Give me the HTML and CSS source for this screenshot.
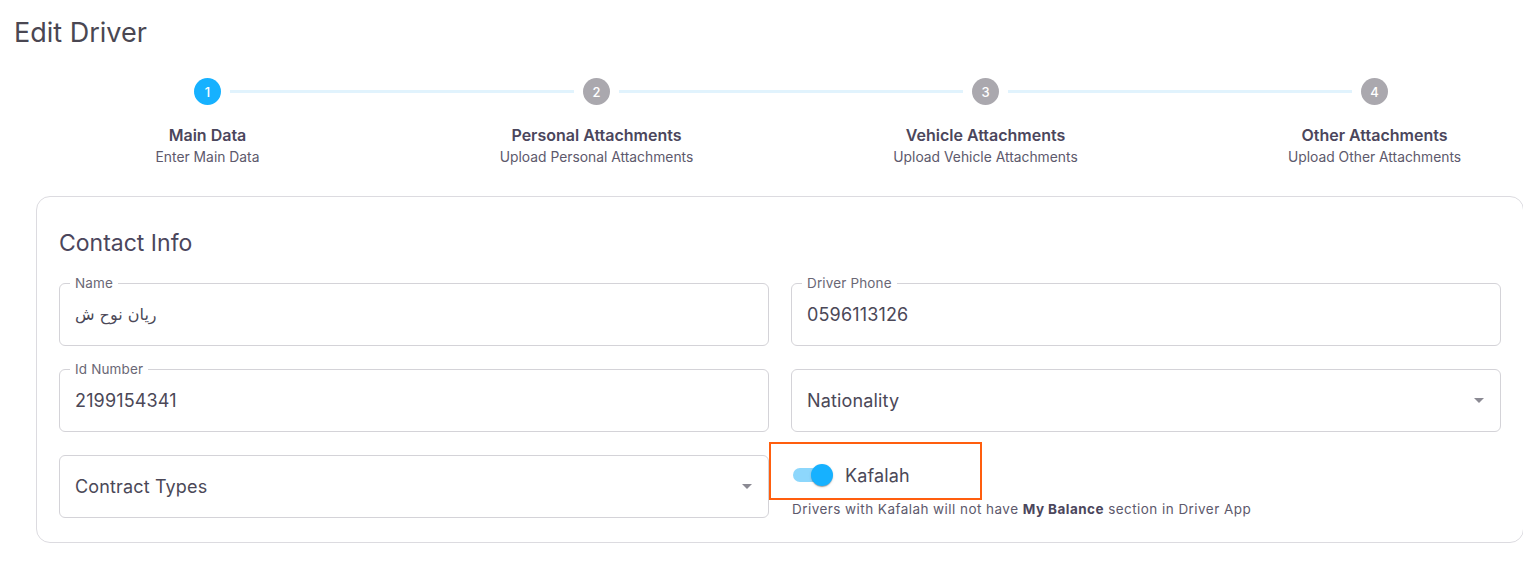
FILE: index.html
```html
<!DOCTYPE html>
<html lang="en">
<head>
<meta charset="utf-8">
<title>Edit Driver</title>
<link rel="stylesheet" href="styles.css">
</head>
<body>
<div class="page">
  <h1 class="page-title">Edit Driver</h1>

  <div class="stepper">
    <div class="step step-first active">
      <div class="step-head"><span class="step-line"></span><span class="step-num">1</span><span class="step-line"></span></div>
      <div class="step-title">Main Data</div>
      <div class="step-sub">Enter Main Data</div>
    </div>
    <div class="step">
      <div class="step-head"><span class="step-line"></span><span class="step-num">2</span><span class="step-line"></span></div>
      <div class="step-title">Personal Attachments</div>
      <div class="step-sub">Upload Personal Attachments</div>
    </div>
    <div class="step">
      <div class="step-head"><span class="step-line"></span><span class="step-num">3</span><span class="step-line"></span></div>
      <div class="step-title">Vehicle Attachments</div>
      <div class="step-sub">Upload Vehicle Attachments</div>
    </div>
    <div class="step step-last">
      <div class="step-head"><span class="step-line"></span><span class="step-num">4</span><span class="step-line"></span></div>
      <div class="step-title">Other Attachments</div>
      <div class="step-sub">Upload Other Attachments</div>
    </div>
  </div>

  <div class="card">
    <h2 class="card-title">Contact Info</h2>
    <div class="form-grid">
      <div class="field">
        <span class="field-label">Name</span>
        <span class="field-value arabic">ريان نوح ش</span>
      </div>
      <div class="field">
        <span class="field-label">Driver Phone</span>
        <span class="field-value">0596113126</span>
      </div>
      <div class="field">
        <span class="field-label">Id Number</span>
        <span class="field-value">2199154341</span>
      </div>
      <div class="field select">
        <span class="field-value">Nationality</span>
        <span class="caret"></span>
      </div>
      <div class="field select">
        <span class="field-value">Contract Types</span>
        <span class="caret"></span>
      </div>
      <div class="switch-cell">
        <div class="highlight">
          <span class="switch"><span class="switch-thumb"></span></span>
          <span class="switch-label">Kafalah</span>
        </div>
        <div class="helper">Drivers with Kafalah will not have <b>My Balance</b> section in Driver App</div>
      </div>
    </div>
  </div>
</div>
</body>
</html>
```

FILE: styles.css
```css
* { box-sizing: border-box; }

html, body {
  margin: 0;
  background: #ffffff;
}

body {
  font-family: Inter, "DejaVu Sans", sans-serif;
  color: #4b465c;
  overflow: hidden;
}

.page {
  padding: 17px 0 0 14px;
  width: 1600px;
}

.page-title {
  margin: 0;
  font-size: 27px;
  line-height: 32px;
  font-weight: 400;
  color: #4a4752;
}

/* Stepper */
.stepper {
  display: grid;
  grid-template-columns: repeat(4, 389px);
  margin: 29px 0 0 -1px;
}

.step {
  display: flex;
  flex-direction: column;
  align-items: center;
}

.step-head {
  display: flex;
  align-items: center;
  width: 100%;
  height: 27px;
}

.step-line {
  flex: 1;
  height: 3px;
  background: #e1f3fd;
}

.step-line:first-child { margin-right: 9px; }
.step-line:last-child { margin-left: 9px; }

.step-first .step-line:first-child,
.step-last .step-line:last-child {
  background: transparent;
}

.step-num {
  width: 27px;
  height: 27px;
  border-radius: 50%;
  background: #aaa8ae;
  color: #ffffff;
  font-size: 13px;
  font-weight: 500;
  display: flex;
  align-items: center;
  justify-content: center;
}

.active .step-num { background: #16b1ff; }

.step-title {
  margin-top: 20px;
  font-size: 16px;
  line-height: 20px;
  font-weight: 600;
  color: #4b465c;
}

.step-sub {
  margin-top: 3px;
  font-size: 13.85px;
  line-height: 18px;
  color: #5d596c;
}

/* Card */
.card {
  margin: 30px 0 0 22px;
  width: 1488px;
  border: 1px solid #dcdbe0;
  border-radius: 14px;
  padding: 31px 22px 24px;
}

.card-title {
  margin: 0;
  font-size: 23px;
  line-height: 30px;
  font-weight: 400;
  color: #4b465c;
}

.form-grid {
  margin-top: 25px;
  display: grid;
  grid-template-columns: 710px 710px;
  column-gap: 22px;
  row-gap: 23px;
}

.field {
  position: relative;
  height: 63px;
  border: 1px solid #d4d3d8;
  border-radius: 6px;
  padding: 0 16px 0 15px;
  display: flex;
  align-items: center;
}

.field-label {
  position: absolute;
  top: -9px;
  left: 10px;
  padding: 0 5px;
  background: #ffffff;
  font-size: 13.5px;
  line-height: 16px;
  letter-spacing: 0.15px;
  color: #6a6775;
}

.field-value {
  font-size: 18px;
  letter-spacing: 0.15px;
  color: #4b4857;
}

.arabic {
  font-family: "DejaVu Sans", sans-serif;
  font-size: 16px;
  letter-spacing: 0;
}

.select { justify-content: space-between; }

.caret {
  width: 0;
  height: 0;
  border-left: 5px solid transparent;
  border-right: 5px solid transparent;
  border-top: 5px solid #8b8a93;
}

/* Switch */
.switch-cell {
  display: flex;
  flex-direction: column;
}

.highlight {
  width: 213px;
  height: 58px;
  margin: -13px 0 0 -22px;
  border: 2px solid #ff5e0e;
  padding: 8px 0 0 22px;
  display: flex;
  align-items: center;
}

.switch {
  width: 38px;
  height: 14px;
  border-radius: 7px;
  background: #8dd7fc;
  display: flex;
  align-items: center;
}

.switch-thumb {
  width: 22px;
  height: 22px;
  border-radius: 50%;
  background: #16b1ff;
  margin-left: auto;
  margin-right: -2px;
  box-shadow: 0 2px 1px -1px rgba(0,0,0,0.2), 0 1px 1px 0 rgba(0,0,0,0.14), 0 1px 3px 0 rgba(0,0,0,0.12);
}

.switch-label {
  margin-left: 14px;
  font-size: 18px;
  letter-spacing: 0.15px;
  color: #4b4857;
}

.helper {
  margin: 0 0 0 1px;
  font-size: 13.5px;
  line-height: 18px;
  letter-spacing: 0.45px;
  color: #5d596c;
}

.helper b {
  font-weight: 700;
  color: #4b465c;
}
```
